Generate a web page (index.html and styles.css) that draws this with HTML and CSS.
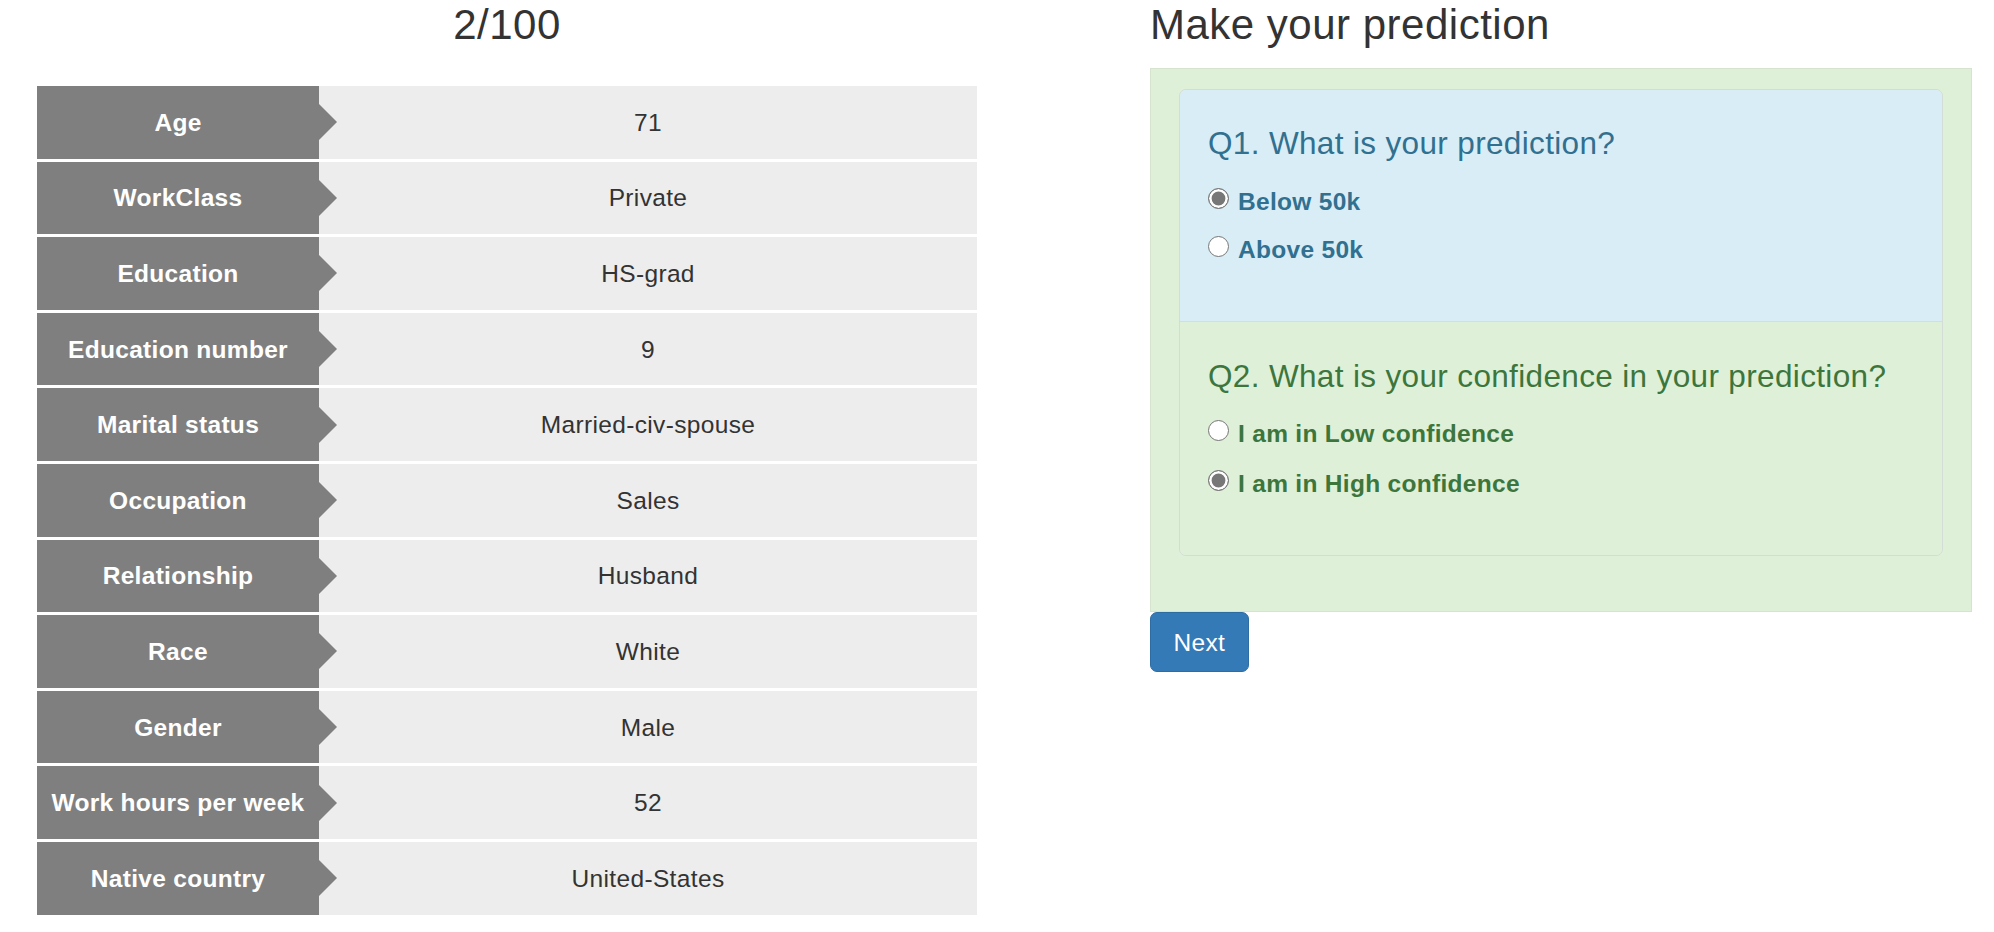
FILE: index.html
```html
<!DOCTYPE html>
<html lang="en">
<head>
<meta charset="utf-8">
<title>Prediction</title>
<link rel="stylesheet" href="styles.css">
</head>
<body>
<div class="page">
  <section class="left-col">
    <h3 class="title title-center">2/100</h3>
    <div class="features">
      <div class="feature-row"><div class="feature-label">Age</div><div class="feature-value">71</div></div>
      <div class="feature-row"><div class="feature-label">WorkClass</div><div class="feature-value">Private</div></div>
      <div class="feature-row"><div class="feature-label">Education</div><div class="feature-value">HS-grad</div></div>
      <div class="feature-row"><div class="feature-label">Education number</div><div class="feature-value">9</div></div>
      <div class="feature-row"><div class="feature-label">Marital status</div><div class="feature-value">Married-civ-spouse</div></div>
      <div class="feature-row"><div class="feature-label">Occupation</div><div class="feature-value">Sales</div></div>
      <div class="feature-row"><div class="feature-label">Relationship</div><div class="feature-value">Husband</div></div>
      <div class="feature-row"><div class="feature-label">Race</div><div class="feature-value">White</div></div>
      <div class="feature-row"><div class="feature-label">Gender</div><div class="feature-value">Male</div></div>
      <div class="feature-row"><div class="feature-label">Work hours per week</div><div class="feature-value">52</div></div>
      <div class="feature-row"><div class="feature-label">Native country</div><div class="feature-value">United-States</div></div>
    </div>
  </section>
  <section class="right-col">
    <h3 class="title">Make your prediction</h3>
    <div class="outer-panel">
      <div class="inner-panel">
        <div class="q-section q-info">
          <h4 class="q-title">Q1. What is your prediction?</h4>
          <label class="choice"><input type="radio" name="q1" class="radio-input" checked><span>Below 50k</span></label>
          <label class="choice choice-next"><input type="radio" name="q1" class="radio-input"><span>Above 50k</span></label>
        </div>
        <div class="q-section q-success">
          <h4 class="q-title">Q2. What is your confidence in your prediction?</h4>
          <label class="choice"><input type="radio" name="q2" class="radio-input"><span>I am in Low confidence</span></label>
          <label class="choice choice-next choice-next-wide"><input type="radio" name="q2" class="radio-input" checked><span>I am in High confidence</span></label>
        </div>
      </div>
    </div>
    <button class="btn-next" type="button">Next</button>
  </section>
</div>
</body>
</html>
```

FILE: styles.css
```css
html, body {
  margin: 0;
  padding: 0;
  background: #fff;
}

body {
  font-family: "Liberation Sans", Arial, Helvetica, sans-serif;
  font-size: 24.5px;
  line-height: 35px;
  letter-spacing: 0.35px;
  color: #333;
}

.page {
  display: flex;
  align-items: flex-start;
  padding-left: 37px;
}

.left-col {
  width: 940px;
}

.right-col {
  width: 822px;
  margin-left: 173px;
}

.title {
  margin: 2.4px 0 0 0;
  font-size: 42px;
  line-height: 46.2px;
  font-weight: 500;
  letter-spacing: 0.5px;
  color: #333;
}

.title-center {
  text-align: center;
}

.features {
  margin-top: 37.4px;
  display: flex;
  flex-direction: column;
  gap: 3px;
}

.feature-row {
  display: flex;
  height: 72.6px;
}

.feature-label {
  position: relative;
  width: 30%;
  flex: none;
  background: #7f7f7f;
  color: #fff;
  font-weight: bold;
  letter-spacing: 0.3px;
  display: flex;
  align-items: center;
  justify-content: center;
  text-align: center;
}

.feature-label::after {
  content: "";
  position: absolute;
  left: 100%;
  top: 50%;
  margin-top: -18px;
  border-left: 18px solid #7f7f7f;
  border-top: 18px solid transparent;
  border-bottom: 18px solid transparent;
}

.feature-value {
  flex: 1;
  background: #ededed;
  display: flex;
  align-items: center;
  justify-content: center;
}

.outer-panel {
  margin-top: 19.4px;
  background: #dff0d8;
  border: 1px solid #d6e3cf;
  padding: 20px 28px 20px 28px;
}

.inner-panel {
  border: 1px solid #d3dcd6;
  border-radius: 7px;
  overflow: hidden;
  margin-bottom: 35px;
}

.q-section {
  padding: 36px 28px 54px 28px;
}

.q-info {
  background: #d9edf7;
  color: #31708f;
}

.q-success {
  background: #dff0d8;
  color: #3c763d;
  border-top: 1px solid #cfdfe6;
  padding-top: 37px;
}

.q-title {
  margin: 0 0 23px 0;
  font-size: 31.5px;
  line-height: 34.65px;
  font-weight: 500;
  letter-spacing: 0.35px;
}

.choice {
  display: flex;
  align-items: flex-start;
  font-weight: bold;
  line-height: 35px;
  letter-spacing: 0.3px;
  cursor: pointer;
}

.choice-next {
  margin-top: 13px;
}

.choice-next-wide {
  margin-top: 15px;
}

.radio-input {
  appearance: none;
  -webkit-appearance: none;
  flex: none;
  width: 21px;
  height: 21px;
  margin: 4px 9px 0 0;
  border: 1.6px solid #767676;
  border-radius: 50%;
  background: #fff;
  box-sizing: border-box;
}

.radio-input:checked {
  background: #777;
  box-shadow: inset 0 0 0 2.6px #fff;
}

.btn-next {
  display: block;
  margin: 0;
  height: 60px;
  padding: 0 22.5px;
  font-family: "Liberation Sans", Arial, Helvetica, sans-serif;
  font-size: 24.5px;
  line-height: 35px;
  letter-spacing: 0.35px;
  color: #fff;
  background: #337ab7;
  border: 1.5px solid #2e6da4;
  border-radius: 7px;
  cursor: pointer;
}
```
